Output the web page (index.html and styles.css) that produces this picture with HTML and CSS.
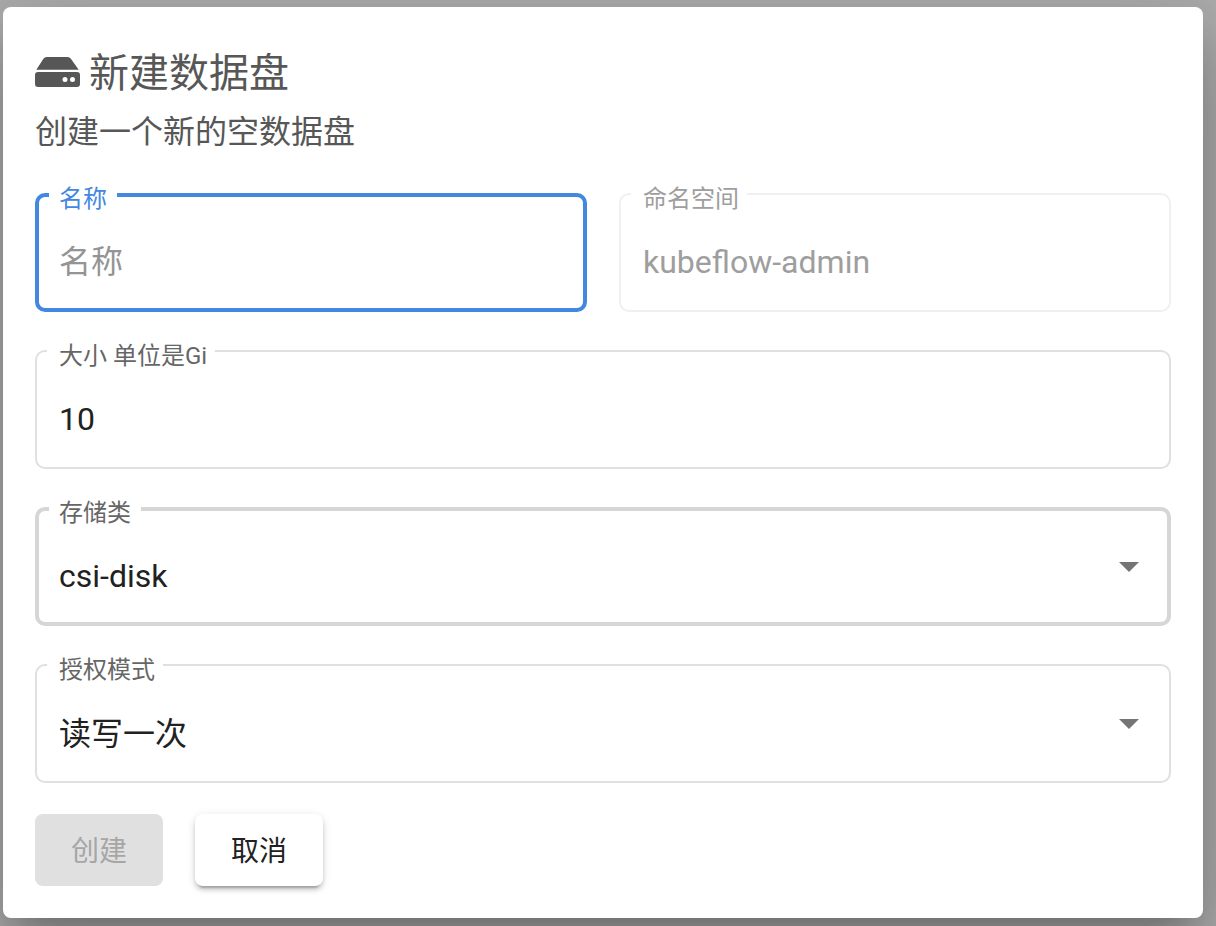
FILE: index.html
```html
<!DOCTYPE html>
<html lang="zh-CN">
<head>
<meta charset="utf-8">
<title>新建数据盘</title>
<link rel="stylesheet" href="styles.css">
</head>
<body>
<main class="dialog" role="dialog" aria-labelledby="dialog-title">
  <header class="dialog-header">
    <h1 class="title" id="dialog-title">
      <svg class="title-icon" viewBox="0 0 45 30" aria-hidden="true">
        <path d="M1.3 12.8 8.6 1.6Q9.7 0 11.6 0H32.6Q34.6 0 35.7 1.6L43.7 12.8Z"/>
        <path fill-rule="evenodd" d="M3 15H42Q45 15 45 18V27Q45 30 42 30H3Q0 30 0 27V18Q0 15 3 15ZM30 20a2.5 2.5 0 1 0 0 5a2.5 2.5 0 1 0 0-5ZM37.5 20a2.5 2.5 0 1 0 0 5a2.5 2.5 0 1 0 0-5Z"/>
      </svg>
      新建数据盘
    </h1>
    <p class="subtitle">创建一个新的空数据盘</p>
  </header>
  <form class="form">
    <div class="row">
      <div class="field field-active">
        <input class="control" id="name" type="text" placeholder="名称">
        <label class="label" for="name">名称</label>
      </div>
      <div class="field field-disabled">
        <input class="control" id="namespace" type="text" value="kubeflow-admin" disabled>
        <label class="label" for="namespace">命名空间</label>
      </div>
    </div>
    <div class="field">
      <input class="control" id="size" type="text" inputmode="numeric" value="10">
      <label class="label" for="size">大小 单位是Gi</label>
    </div>
    <div class="field field-hover">
      <select class="control" id="storage-class"><option>csi-disk</option></select>
      <label class="label" for="storage-class">存储类</label>
      <svg class="arrow" viewBox="0 0 20 10" aria-hidden="true"><path d="M0 0H20L10 10Z"/></svg>
    </div>
    <div class="field">
      <select class="control" id="access-mode"><option>读写一次</option></select>
      <label class="label" for="access-mode">授权模式</label>
      <svg class="arrow" viewBox="0 0 20 10" aria-hidden="true"><path d="M0 0H20L10 10Z"/></svg>
    </div>
    <div class="actions">
      <button class="button button-disabled" type="submit" disabled>创建</button>
      <button class="button button-raised" type="button">取消</button>
    </div>
  </form>
</main>
</body>
</html>
```

FILE: styles.css
```css
* {
  box-sizing: border-box;
}

body {
  margin: 0;
  padding: 7px 13px 8px 3px;
  background: #adadad;
  font-family: Roboto, "Noto Sans CJK SC", sans-serif;
  overflow: hidden;
}

.dialog {
  padding: 32px;
  border-radius: 8px;
  background: #fff;
  box-shadow:
    0 22px 30px -14px rgba(0, 0, 0, 0.2),
    0 48px 76px 6px rgba(0, 0, 0, 0.14),
    0 18px 92px 16px rgba(0, 0, 0, 0.12);
}

.dialog-header {
  margin-bottom: 38px;
  color: #575757;
}

.title {
  display: flex;
  align-items: center;
  gap: 9px;
  margin: 0;
  font-size: 40px;
  font-weight: 400;
  line-height: 70px;
}

.title-icon {
  width: 45px;
  height: 30px;
  margin-bottom: 4px;
  fill: currentColor;
}

.subtitle {
  margin: 0;
  font-size: 32px;
  line-height: 46px;
}

.form {
  display: flex;
  flex-direction: column;
  gap: 38px;
}

.row {
  display: grid;
  grid-template-columns: 1fr 1fr;
  gap: 32px;
}

.field {
  position: relative;
}

.control {
  display: block;
  width: 100%;
  height: 119px;
  margin: 0;
  padding: 18px 22px 0;
  border: 2px solid #e0e0e0;
  border-radius: 10px;
  outline: 0;
  background: #fff;
  color: #212121;
  font: inherit;
  font-size: 32px;
  appearance: none;
}

select.control {
  padding-top: 20px;
}

.control::placeholder {
  color: #949494;
  opacity: 1;
}

.label {
  position: absolute;
  top: -12px;
  left: 12px;
  padding: 0 8px 0 12px;
  background: #fff;
  color: #666;
  font-size: 24px;
  line-height: 36px;
}

.field-active .control,
.field-hover .control {
  padding: 18px 20px 0;
  border-width: 4px;
}

.field-active .label,
.field-hover .label {
  left: 14px;
  padding: 0 10px;
}

.field-active .control {
  border-color: #4287e0;
}

.field-active .label {
  color: #4287e0;
}

.field-hover .control {
  border-color: #d6d6d6;
}

.field-disabled .control {
  border-color: #f0f0f0;
  color: #9e9e9e;
}

.field-disabled .label {
  color: #9e9e9e;
}

.arrow {
  position: absolute;
  top: 55px;
  right: 32px;
  width: 20px;
  height: 10px;
  fill: #757575;
  pointer-events: none;
}

.actions {
  display: flex;
  gap: 32px;
  margin-top: -7px;
}

.button {
  min-width: 128px;
  height: 72px;
  padding: 0 32px 2px;
  border: 0;
  border-radius: 8px;
  font: inherit;
  font-size: 28px;
}

.button-disabled {
  background: #e0e0e0;
  color: #a6a6a6;
}

.button-raised {
  background: #fff;
  color: #212121;
  box-shadow:
    0 6px 2px -4px rgba(0, 0, 0, 0.2),
    0 4px 4px 0 rgba(0, 0, 0, 0.14),
    0 2px 10px 0 rgba(0, 0, 0, 0.12);
}
```
